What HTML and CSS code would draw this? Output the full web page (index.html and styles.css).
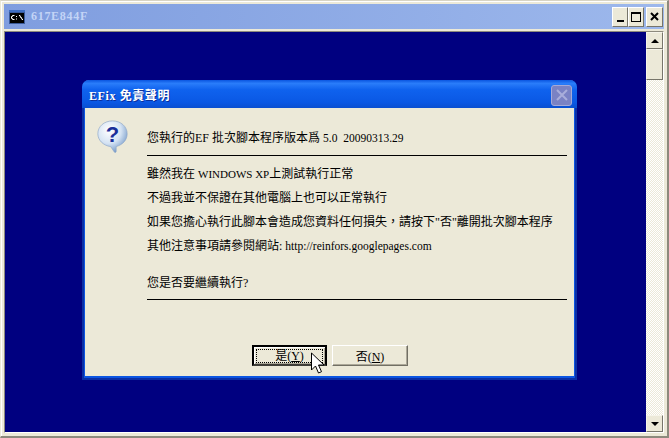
FILE: index.html
```html
<!DOCTYPE html>
<html lang="zh-Hant">
<head>
  <meta charset="UTF-8">
  <title>617E844F</title>
  <link rel="stylesheet" href="styles.css">
</head>
<body>
  <div class="window">
    <div class="titlebar">
      <svg class="cmd-icon" width="16" height="14" viewBox="0 0 16 14">
        <rect width="16" height="14" fill="#3a5a9a"/>
        <rect x="0" y="0" width="16" height="2" fill="#3f6fc4"/>
        <rect x="1" y="3" width="14" height="10" fill="#000"/>
        <path d="M5.500 5.500h-2v1h-1v2h1v1h2M7.500 6v1M7.500 8.500v1M10 5.500h1v1h.5v1h1v1h.5v1h1" stroke="#fff" fill="none" stroke-width="1"/>
      </svg>
      <span class="title">617E844F</span>
      <div class="caption-btns">
        <button class="cap-btn"><span class="cap-min"></span></button>
        <button class="cap-btn"><span class="cap-max"></span></button>
        <button class="cap-btn cap-close-btn">
          <svg width="9" height="9" viewBox="0 0 9 9"><path d="M1 1l7 7M8 1l-7 7" stroke="#000" stroke-width="2"/></svg>
        </button>
      </div>
    </div>
    <div class="client">
      <div class="console"></div>
      <div class="scrollbar">
        <div class="sb-btn"><span class="arrow-up"></span></div>
        <div class="sb-thumb"></div>
        <div class="sb-track"></div>
        <div class="sb-btn"><span class="arrow-down"></span></div>
      </div>
    </div>

    <div class="dialog">
      <div class="dlg-title">
        <span>EFix 免責聲明</span>
        <div class="dlg-close">
          <svg width="14" height="14" viewBox="0 0 14 14"><path d="M2 2l10 10M12 2l-10 10" stroke="#a9aedb" stroke-width="2"/></svg>
        </div>
      </div>
      <div class="dlg-body">
        <div class="dlg-icon">
          <svg width="33" height="33" viewBox="0 0 34 36">
            <defs>
              <radialGradient id="bubble" cx="0.38" cy="0.3" r="0.75">
                <stop offset="0" stop-color="#ffffff"/>
                <stop offset="0.55" stop-color="#d5e3f3"/>
                <stop offset="1" stop-color="#6f95c6"/>
              </radialGradient>
            </defs>
            <path d="M17 1C8 1 1 7 1 15c0 7 6 13 14 14l4 6c1 1 2 0 2-1v-5c7-2 12-7 12-14C33 7 26 1 17 1z" fill="url(#bubble)" stroke="#8aa5c8" stroke-width="0.700"/>
            <text class="q-mark" x="17" y="24" text-anchor="middle">?</text>
          </svg>
        </div>
        <div class="dlg-text">
          <p class="line first">您執行的EF 批次腳本程序版本爲 <span class="lat-num">5.0&nbsp; 20090313.29</span></p>
          <hr class="rule">
          <p class="line">雖然我在 <span class="lat-win">WINDOWS XP</span>上測試執行正常</p>
          <p class="line">不過我並不保證在其他電腦上也可以正常執行</p>
          <p class="line">如果您擔心執行此腳本會造成您資料任何損失，請按下"否"離開批次腳本程序</p>
          <p class="line">其他注意事項請參閱網站: <span class="lat-num">http://reinfors.googlepages.com</span></p>
          <p class="line ask">您是否要繼續執行?</p>
          <hr class="rule last">
        </div>
      </div>
      <div class="dlg-buttons">
        <button class="btn default"><span class="focus">是(<u>Y</u>)</span></button>
        <button class="btn plain"><span>否(<u>N</u>)</span></button>
      </div>
    </div>

    <svg class="cursor" width="16" height="24" viewBox="0 0 16 24">
      <path d="M1.500 1v17l4-4 3 7 3-1.300-3-6.700h5.500z" fill="#fff" stroke="#000" stroke-width="1"/>
    </svg>
  </div>
</body>
</html>
```

FILE: styles.css
```css
html, body {
  margin: 0;
  padding: 0;
  width: 669px;
  height: 438px;
  overflow: hidden;
  background: #ece9d8;
  font-family: "Liberation Serif", "Noto Sans CJK TC", serif;
  font-size: 12px;
  color: #000;
}
.window {
  position: relative;
  box-sizing: border-box;
  width: 669px;
  height: 438px;
  padding: 3px 3px 3px 3px;
  display: flex;
  flex-direction: column;
  background: #ece9d8;
  border-top: 1px solid #d8d4c4;
  border-left: 1px solid #ece9d8;
  border-right: 2px solid #8d8a7d;
  border-bottom: 2px solid #8d8a7d;
  box-shadow: inset 1px 1px 0 #fff;
}
.titlebar {
  height: 25px;
  flex: none;
  padding: 0 1px 0 5px;
  display: flex;
  align-items: center;
  background: linear-gradient(to right, #7f9ddf, #9db8ec);
}
.cmd-icon { flex: none; }
.title {
  margin-left: 6px;
  font-weight: bold;
  font-size: 12px;
  letter-spacing: 0.7px;
  color: #c3d4f6;
}
.caption-btns {
  margin-left: auto;
  display: flex;
}
.cap-btn {
  width: 16px;
  height: 20px;
  padding: 0;
  display: flex;
  align-items: center;
  justify-content: center;
  background: #ece9d8;
  border: 1px solid;
  border-color: #fff #77756a #77756a #fff;
}
.cap-close-btn { margin-left: 2px; width: 17px; }
.cap-min {
  display: block;
  width: 7px;
  height: 2px;
  margin-top: 9px;
  background: #000;
}
.cap-max {
  display: block;
  box-sizing: border-box;
  width: 10px;
  height: 10px;
  border: 1px solid #000;
  border-top-width: 2px;
}
.client {
  flex: 1;
  min-height: 0;
  margin-top: 2px;
  display: flex;
  border: 1px solid;
  border-color: #8d8a7d #fff #fff #8d8a7d;
}
.console {
  flex: 1;
  background: #000080;
}
.scrollbar {
  width: 17px;
  flex: none;
  display: flex;
  flex-direction: column;
  background: repeating-conic-gradient(#ece9d8 0 25%, #fff 0 50%) 0 0 / 2px 2px;
}
.sb-btn, .sb-thumb {
  box-sizing: border-box;
  flex: none;
  background: #ece9d8;
  border: 1px solid;
  border-color: #f6f4ea #77756a #77756a #f6f4ea;
}
.sb-btn {
  height: 17px;
  display: flex;
  align-items: center;
  justify-content: center;
}
.sb-thumb { height: 31px; }
.sb-track { flex: 1; }
.arrow-up, .arrow-down {
  width: 0;
  height: 0;
  border-left: 4px solid transparent;
  border-right: 4px solid transparent;
}
.arrow-up { border-bottom: 4px solid #000; }
.arrow-down { border-top: 4px solid #000; }

.dialog {
  position: absolute;
  left: 81px;
  top: 79px;
  box-sizing: border-box;
  width: 495px;
  height: 300px;
  padding: 0 1px 2px;
  display: flex;
  flex-direction: column;
  background: #ece9d8;
  border: 2px solid #0a2fa6;
  border-top: none;
  border-radius: 7px 7px 0 0;
  box-shadow: inset 1px 0 0 #0b55e2, inset -1px 0 0 #0b55e2, inset 0 -2px 0 #0b55e2;
}
.dlg-title {
  height: 28px;
  flex: none;
  box-sizing: border-box;
  margin: 0 -3px;
  padding: 2px 5px 0 7px;
  display: flex;
  align-items: center;
  justify-content: space-between;
  border-radius: 7px 7px 0 0;
  background: linear-gradient(to bottom, #0a55e0 0, #2a7dfa 12%, #0f62ee 35%, #0a58e4 80%, #0a4fd0 100%);
  font-weight: bold;
  font-size: 12px;
  letter-spacing: 0.6px;
  color: #fff;
  text-shadow: 1px 1px 0 #0a2f9a;
}
.dlg-close {
  width: 21px;
  height: 21px;
  box-sizing: border-box;
  display: flex;
  align-items: center;
  justify-content: center;
  border-radius: 3px;
  border: 1px solid #a6a9d6;
  background: #7a82c4;
}
.dlg-body {
  flex: 1;
  display: flex;
  padding: 12px 7px 0 11px;
}
.dlg-icon {
  width: 51px;
  flex: none;
}
.q-mark {
  font-family: "Liberation Sans", sans-serif;
  font-weight: bold;
  font-size: 24px;
  fill: #1a2f9a;
}
.dlg-text { flex: 1; }
.line {
  margin: 0;
  height: 24px;
  line-height: 26px;
  white-space: nowrap;
}
.lat-num { font-size: 11.500px; }
.lat-win { font-size: 11px; }
.line.first { margin-top: 5px; }
.line.ask { margin-top: 13px; }
.rule {
  margin: 6px 0 5px;
  height: 1px;
  border: 0;
  background: #000;
}
.rule.last { margin-top: 5px; }
.dlg-buttons {
  flex: none;
  display: flex;
  justify-content: center;
  gap: 5px;
  padding: 0 0 10px 1px;
}
.btn {
  box-sizing: border-box;
  width: 75px;
  height: 21px;
  padding: 0;
  font: inherit;
  background: #ece9d8;
  border: 1px solid;
  border-color: #fff #716f64 #716f64 #fff;
  box-shadow: inset -1px -1px 0 #aca899;
  display: flex;
  align-items: center;
  justify-content: center;
}
.btn.plain { width: 76px; }
.btn.default {
  border: 2px solid;
  border-color: #000 #000 #3f3e38 #000;
  box-shadow: inset 1px 1px 0 #fff, inset -1px -1px 0 #aca899;
}
.focus {
  box-sizing: border-box;
  width: 67px;
  height: 14px;
  line-height: 12px;
  border: 1px dotted #000;
  text-align: center;
}
.cursor {
  position: absolute;
  left: 309px;
  top: 351px;
}
```
